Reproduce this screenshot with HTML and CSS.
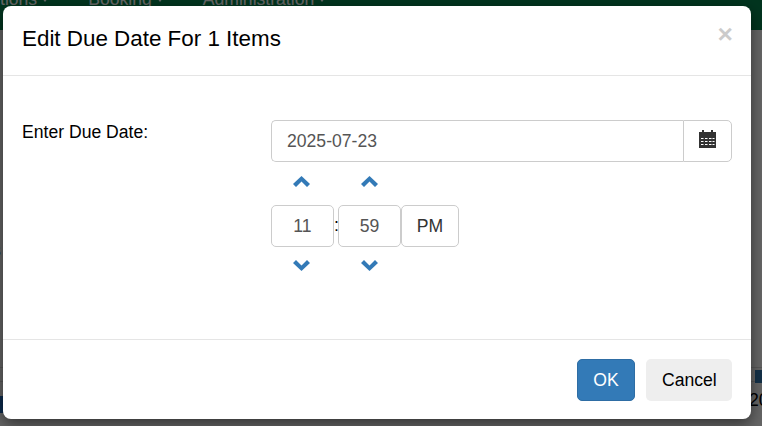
FILE: index.html
```html
<!DOCTYPE html>
<html lang="en">
<head>
<meta charset="utf-8">
<title>Edit Due Date</title>
<link rel="stylesheet" href="styles.css">
</head>
<body>
<nav class="navbar">
  <span class="nav-item">tions<i class="caret"></i></span>
  <span class="nav-item">Booking<i class="caret"></i></span>
  <span class="nav-item">Administration<i class="caret"></i></span>
</nav>
<main class="page">
  <div class="page-lead">s</div>
  <div class="page-row page-row-head"><b class="page-head-cell">D</b></div>
  <div class="page-row page-row-data"><i class="page-link"></i><span class="page-date">20</span></div>
</main>
<div class="backdrop"></div>
<div class="modal">
  <header class="modal-header">
    <h4 class="modal-title">Edit Due Date For 1 Items</h4>
    <span class="close">×</span>
  </header>
  <section class="modal-body">
    <label class="field-label">Enter Due Date:</label>
    <div class="field">
      <div class="input-group">
        <div class="date-input">2025-07-23</div>
        <div class="addon">
          <svg class="cal" viewBox="0 0 17 18" width="17" height="18"><path fill="#333" d="M3 0h2v2h7V0h2v2h3v16H0V2h3z"/><path fill="#fff" d="M2 8h2.500v1H2zM6 8h2.500v1H6zM10 8h2.500v1H10zM13.500 8h2v1h-2zM2 11h2.500v1H2zM6 11h2.500v1H6zM10 11h2.500v1H10zM13.500 11h2v1h-2zM2 14h2.500v1H2zM6 14h2.500v1H6zM10 14h2.500v1H10zM13.500 14h2v1h-2z"/></svg>
        </div>
      </div>
      <div class="timepicker">
        <div class="tp-col tp-col-hour">
          <svg class="chev chev-up" viewBox="0 0 17 11" width="17" height="11"><path d="M8.500 0L17 8l-3 3-5.500-5.500L3 11 0 8z"/></svg>
          <div class="tp-box">11</div>
          <svg class="chev chev-down" viewBox="0 0 17 11" width="17" height="11"><path d="M8.500 11L17 3l-3-3-5.500 5.500L3 0 0 3z"/></svg>
        </div>
        <span class="tp-sep">:</span>
        <div class="tp-col">
          <svg class="chev chev-up" viewBox="0 0 17 11" width="17" height="11"><path d="M8.500 0L17 8l-3 3-5.500-5.500L3 11 0 8z"/></svg>
          <div class="tp-box">59</div>
          <svg class="chev chev-down" viewBox="0 0 17 11" width="17" height="11"><path d="M8.500 11L17 3l-3-3-5.500 5.500L3 0 0 3z"/></svg>
        </div>
        <div class="tp-ampm">PM</div>
      </div>
    </div>
  </section>
  <footer class="modal-footer">
    <button class="btn btn-primary">OK</button>
    <button class="btn btn-default">Cancel</button>
  </footer>
</div>
</body>
</html>
```
FILE: styles.css
```css
* { box-sizing: border-box; }
html, body { margin: 0; height: 100%; }
body {
  position: relative;
  width: 762px;
  height: 426px;
  overflow: hidden;
  background: #fff;
  font-family: "Liberation Sans", Arial, sans-serif;
  font-size: 17.6px;
  color: #333;
}
.navbar {
  display: flex;
  gap: 40px;
  height: 40px;
  margin-top: -10px;
  background: #07854f;
  color: #fff;
  line-height: 18px;
}
.nav-item { white-space: nowrap; }
.caret {
  display: inline-block;
  width: 0;
  height: 0;
  margin-left: 5px;
  vertical-align: middle;
  border-top: 4px solid #fff;
  border-left: 3px solid transparent;
  border-right: 3px solid transparent;
}
.page { height: 396px; }
.page-lead {
  height: 337px;
  padding-top: 211px;
  margin-left: -8px;
  line-height: 18px;
  color: #000;
}
.page-row {
  display: flex;
  justify-content: space-between;
  border-top: 1px solid #ddd;
}
.page-row-head { height: 15px; border-bottom: 1px solid #ddd; }
.page-row-data { height: 44px; border-top: 0; }
.page-head-cell {
  margin-left: auto;
  width: 7px;
  margin-top: 2px;
  height: 13px;
  overflow: hidden;
  line-height: 13px;
  color: #337ab7;
  background: #337ab7;
}
.page-link {
  width: 3px;
  height: 17px;
  margin-top: 14px;
  background: #1e6cc0;
}
.page-date {
  width: 13px;
  margin-top: 8px;
  line-height: 20px;
  overflow: hidden;
  color: #000;
}
.backdrop {
  position: absolute;
  inset: 0;
  background: rgba(0, 0, 0, .6);
}
.modal {
  position: absolute;
  left: 3px;
  top: 6px;
  width: 748px;
  height: 413px;
  display: flex;
  flex-direction: column;
  background: #fff;
  border-radius: 8px;
  box-shadow: 0 5px 15px rgba(0, 0, 0, .5);
}
.modal-header {
  display: flex;
  justify-content: space-between;
  height: 70px;
  padding: 19px 19px 0;
  border-bottom: 1px solid #e5e5e5;
}
.modal-title {
  margin: 0;
  font-size: 22.4px;
  font-weight: 400;
  line-height: 27px;
  color: #000;
}
.close {
  margin: 0 -1px 0 0;
  font-size: 26.4px;
  font-weight: 700;
  line-height: 19px;
  color: #000;
  opacity: .2;
}
.modal-body {
  flex: 1;
  display: flex;
  padding: 44px 19px 0;
}
.field-label {
  width: 249px;
  line-height: 24px;
  color: #000;
}
.field { flex: 1; }
.input-group { display: flex; height: 42px; }
.date-input {
  flex: 1;
  padding: 0 15px;
  border: 1px solid #ccc;
  border-right: 0;
  border-radius: 5px 0 0 5px;
  line-height: 40px;
  color: #555;
}
.addon {
  width: 49px;
  display: flex;
  align-items: center;
  justify-content: center;
  border: 1px solid #ccc;
  border-radius: 0 5px 5px 0;
}
.cal { margin-bottom: 4px; }
.timepicker { display: flex; align-items: center; margin-top: 14px; }
.tp-col {
  width: 63px;
  display: flex;
  flex-direction: column;
  align-items: center;
}
.tp-col-hour .chev { margin-right: 2px; }
.tp-box {
  width: 63px;
  height: 42px;
  border: 1px solid #ccc;
  border-radius: 5px;
  text-align: center;
  line-height: 40px;
  color: #555;
}
.tp-sep {
  width: 4px;
  margin-top: 3px;
  text-align: center;
  color: #000;
  line-height: 24px;
}
.tp-ampm {
  width: 58px;
  height: 42px;
  margin-top: 5px;
  border: 1px solid #ccc;
  border-radius: 5px;
  text-align: center;
  line-height: 40px;
}
.chev { display: block; fill: #337ab7; }
.chev-up { margin-bottom: 18px; }
.chev-down { margin-top: 13px; }
.modal-footer {
  display: flex;
  justify-content: flex-end;
  gap: 11px;
  height: 80px;
  padding: 19px 19px 0;
  border-top: 1px solid #e5e5e5;
}
.btn {
  height: 42px;
  padding: 0 15px;
  border: 1px solid transparent;
  border-radius: 5px;
  font: 17.6px "Liberation Sans", Arial, sans-serif;
}
.btn-primary { width: 58px; background: #337ab7; border-color: #2e6da4; color: #fff; }
.btn-default { width: 86px; background: #eee; color: #000; }
```
